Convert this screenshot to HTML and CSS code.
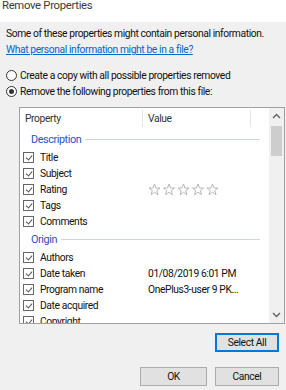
FILE: index.html
```html
<!DOCTYPE html>
<html lang="en">

<head>
    <meta charset="UTF-8">
    <meta name="viewport" content="width=device-width, initial-scale=1.0">
    <title>Remove Properties</title>
    <link rel="stylesheet" href="styles.css">
</head>

<body>
    <div class="dialog">
        <div class="titlebar">Remove Properties</div>

        <div class="content">
            <p class="intro">Some of these properties might contain personal information.</p>
            <a class="link" href="#">What personal information might be in a file?</a>

            <label class="radio"><span class="dot"></span>Create a copy with all possible properties removed</label>
            <label class="radio"><span class="dot on"></span>Remove the following properties from this file:</label>

            <div class="listbox">
                <div class="list">
                    <div class="head">
                        <div class="col-prop">Property</div>
                        <div class="col-val">Value</div>
                        <div class="col-rest"></div>
                    </div>

                    <div class="group">Description<span class="rule"></span></div>
                    <div class="row"><span class="check"></span><span class="name">Title</span><span class="val"></span></div>
                    <div class="row"><span class="check"></span><span class="name">Subject</span><span class="val"></span></div>
                    <div class="row"><span class="check"></span><span class="name">Rating</span>
                        <span class="val stars">
                            <svg width="74" height="13" viewBox="0 0 74 13">
                                <g fill="none" stroke="#b0b0b0" stroke-width="0.9" stroke-linejoin="round">
                                    <polygon points="6.5,1 8,5 12,5 8.8,7.6 10,11.7 6.5,9.3 3,11.7 4.2,7.6 1,5 5,5" />
                                    <polygon transform="translate(14.5 0)" points="6.5,1 8,5 12,5 8.8,7.6 10,11.7 6.5,9.3 3,11.7 4.2,7.6 1,5 5,5" />
                                    <polygon transform="translate(29 0)" points="6.5,1 8,5 12,5 8.8,7.6 10,11.7 6.5,9.3 3,11.7 4.2,7.6 1,5 5,5" />
                                    <polygon transform="translate(43.5 0)" points="6.5,1 8,5 12,5 8.8,7.6 10,11.7 6.5,9.3 3,11.7 4.2,7.6 1,5 5,5" />
                                    <polygon transform="translate(58 0)" points="6.5,1 8,5 12,5 8.8,7.6 10,11.7 6.5,9.3 3,11.7 4.2,7.6 1,5 5,5" />
                                </g>
                            </svg>
                        </span>
                    </div>
                    <div class="row"><span class="check"></span><span class="name">Tags</span><span class="val"></span></div>
                    <div class="row"><span class="check"></span><span class="name">Comments</span><span class="val"></span></div>

                    <div class="group">Origin<span class="rule"></span></div>
                    <div class="row"><span class="check"></span><span class="name">Authors</span><span class="val"></span></div>
                    <div class="row"><span class="check"></span><span class="name">Date taken</span><span class="val">01/08/2019 6:01 PM</span></div>
                    <div class="row"><span class="check"></span><span class="name">Program name</span><span class="val">OnePlus3-user 9 PK...</span></div>
                    <div class="row"><span class="check"></span><span class="name">Date acquired</span><span class="val"></span></div>
                    <div class="row"><span class="check"></span><span class="name">Copyright</span><span class="val"></span></div>
                </div>

                <div class="scrollbar">
                    <svg class="arrow" width="15" height="16" viewBox="0 0 15 16">
                        <polyline points="4,10 7.5,6.5 11,10" fill="none" stroke="#606060" stroke-width="1.4" />
                    </svg>
                    <div class="thumb"></div>
                    <div class="track"></div>
                    <svg class="arrow" width="15" height="16" viewBox="0 0 15 16">
                        <polyline points="4,6 7.5,9.5 11,6" fill="none" stroke="#606060" stroke-width="1.4" />
                    </svg>
                </div>
            </div>

            <div class="select-row">
                <button class="btn default">Select All</button>
            </div>

            <div class="actions">
                <button class="btn ok">OK</button>
                <button class="btn">Cancel</button>
            </div>
        </div>
    </div>
</body>

</html>
```

FILE: styles.css
```css
body,
html {
    margin: 0;
    padding: 0;
    background: #f0f0f0;
    color: #111;
    font-family: Roboto, 'Liberation Sans', sans-serif;
    font-size: 10.3px;
    letter-spacing: -0.4px;
}

.dialog {
    width: 286px;
    height: 390px;
    overflow: hidden;
}

.titlebar {
    height: 22px;
    background: #fff;
    padding-left: 2px;
    font-size: 11.3px;
    line-height: 11px;
    color: #3a3a3a;
    letter-spacing: -0.3px;
}

.content {
    padding: 4px 0 0 6px;
}

.intro {
    margin: 0;
    line-height: 16px;
    white-space: nowrap;
}

.link {
    display: block;
    line-height: 16px;
    color: #0066cc;
    text-decoration: underline;
    white-space: nowrap;
}

.radio {
    display: flex;
    align-items: center;
    height: 16px;
    white-space: nowrap;
}

.radio:first-of-type {
    margin-top: 9px;
}

.dot {
    width: 9px;
    height: 9px;
    border: 1px solid #333;
    border-radius: 50%;
    background: #fff;
    margin-right: 3px;
    position: relative;
    flex: none;
}

.dot.on::after {
    content: '';
    position: absolute;
    left: 2px;
    top: 2px;
    width: 5px;
    height: 5px;
    border-radius: 50%;
    background: #333;
}

.listbox {
    display: flex;
    margin: 8px 0 0 13px;
    width: 264px;
    height: 215px;
    border: 1px solid #a0a0a0;
    background: #fff;
    overflow: hidden;
}

.list {
    flex: 1;
    overflow: hidden;
}

.head {
    display: flex;
    height: 21px;
    align-items: center;
    color: #333;
}

.head div {
    height: 17px;
    line-height: 17px;
    border-right: 1px solid #e5e5e5;
}

.col-prop {
    width: 117px;
    padding-left: 5px;
}

.col-val {
    width: 102px;
    padding-left: 5px;
}

.col-rest {
    flex: 1;
    border-right: none !important;
}

.group {
    display: flex;
    align-items: center;
    height: 20px;
    padding-left: 11px;
    color: #2b50c8;
    font-size: 10.8px;
}

.rule {
    flex: 1;
    height: 1px;
    margin: 0 9px 0 4px;
    background: #c9d7f0;
}

.row {
    display: flex;
    align-items: center;
    height: 16px;
}

.check {
    width: 9px;
    height: 9px;
    margin: 0 6px 0 3px;
    border: 1px solid #666;
    position: relative;
    flex: none;
}

.check::after {
    content: '';
    position: absolute;
    left: 1px;
    top: 0px;
    width: 5px;
    height: 3px;
    border-left: 1.3px solid #555;
    border-bottom: 1.3px solid #555;
    transform: translate(1px, 2px) rotate(-50deg);
}

.name {
    width: 108px;
    white-space: nowrap;
}

.val {
    white-space: nowrap;
}

.stars svg {
    display: block;
    margin-top: 1px;
}

.scrollbar {
    width: 15px;
    display: flex;
    flex-direction: column;
    align-items: center;
    background: #f0f0f0;
}

.arrow {
    display: block;
    flex: none;
}

.thumb {
    width: 11px;
    height: 30px;
    margin-top: 2px;
    background: #cdcdcd;
}

.track {
    flex: 1;
}

.select-row {
    display: flex;
    justify-content: flex-end;
    margin: 9px 7px 0 0;
}

.btn {
    font-family: Roboto, 'Liberation Sans', sans-serif;
    font-size: 10.3px;
    letter-spacing: -0.4px;
    color: #111;
    background: #e1e1e1;
    border: 1px solid #adadad;
    padding: 0;
    height: 19px;
    width: 64px;
}

.btn.default {
    border-color: #0078d7;
    box-shadow: inset 0 0 0 1px #0078d7;
}

.actions {
    display: flex;
    justify-content: flex-end;
    gap: 8px;
    margin: 15px 7px 0 0;
}

.btn.ok {
    width: 67px;
}
```
